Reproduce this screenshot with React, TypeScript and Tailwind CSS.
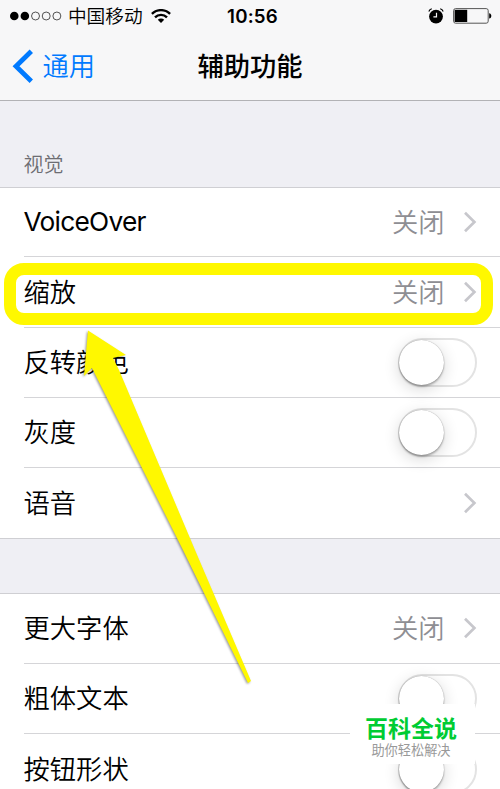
import type { ReactNode } from "react";
import clsx from "clsx";

type Item = {
  label: string;
  value?: string;
  toggle?: boolean;
};

const visionItems: Item[] = [
  { label: "VoiceOver", value: "关闭" },
  { label: "缩放", value: "关闭" },
  { label: "反转颜色", toggle: true },
  { label: "灰度", toggle: true },
  { label: "语音" },
];

const textItems: Item[] = [
  { label: "更大字体", value: "关闭" },
  { label: "粗体文本", toggle: true },
  { label: "按钮形状", toggle: true },
];

function Chevron() {
  return (
    <svg width="14" height="22" viewBox="0 0 14 22" fill="none" className="ml-[18px]">
      <path d="M2 1.8 11.4 11 2 20.2" stroke="#c7c7cc" strokeWidth="2.7" />
    </svg>
  );
}

function Toggle() {
  return (
    <div className="flex h-[49px] w-[79px] items-center rounded-full border-2 border-[#e3e3e3] bg-white">
      <div className="-ml-px size-[45px] rounded-full bg-white shadow-[0_2px_2px_rgba(0,0,0,0.25),0_0_1px_rgba(0,0,0,0.4),0_4px_16px_rgba(0,0,0,0.16)]" />
    </div>
  );
}

function Row({ item, last }: { item: Item; last: boolean }) {
  return (
    <div
      className={clsx(
        "ml-[23.5px] flex items-center justify-between pr-[23.5px]",
        !last && "border-b border-[#d5d5d8]"
      )}
    >
      <span className={item.label === "VoiceOver" ? "font-normal tracking-[-0.75px]" : "pt-0.5"}>
        {item.label}
      </span>
      {item.toggle ? (
        <Toggle />
      ) : (
        <div className="flex items-center text-[#8e8e93]">
          {item.value && <span className="pt-0.5">{item.value}</span>}
          <Chevron />
        </div>
      )}
    </div>
  );
}

function Group({ items, children, className }: { items: Item[]; children?: ReactNode; className: string }) {
  return (
    <section
      className={clsx(
        "relative grid border-y border-[#cfcfd3] bg-white text-[26.3px] leading-none font-[350] text-black",
        className
      )}
    >
      {items.map((item, i) => (
        <Row key={item.label} item={item} last={i === items.length - 1} />
      ))}
      {children}
    </section>
  );
}

function StatusBar() {
  return (
    <div className="grid h-8 grid-cols-3 items-center pr-[8px] pl-[10px]">
      <div className="flex items-center">
        <svg width="54" height="10" viewBox="0 0 54 10">
          <circle cx="4.4" cy="5" r="4.4" />
          <circle cx="15.3" cy="5" r="4.4" />
          <g fill="none" stroke="#222" strokeWidth="0.8">
            <circle cx="26.3" cy="5" r="4.1" />
            <circle cx="37.3" cy="5" r="4.1" />
            <circle cx="48.3" cy="5" r="4.1" />
          </g>
        </svg>
        <span className="ml-[5.5px] pt-0.5 text-[18.7px] leading-none font-[350] whitespace-nowrap">中国移动</span>
        <svg width="20" height="14" viewBox="0 0 20 14" fill="none" stroke="#000" strokeWidth="2.4" className="ml-[8px] shrink-0">
          <path d="M.9 4.9a12.9 12.9 0 0 1 18.2 0" />
          <path d="M4 8.4a8.5 8.5 0 0 1 12 0" />
          <path d="M10 14 6.8 10.8a4.5 4.5 0 0 1 6.4 0Z" fill="#000" stroke="none" />
        </svg>
      </div>
      <span className="pt-0.5 pl-[3px] text-center text-[18.7px] leading-none font-semibold tracking-[0.2px]">10:56</span>
      <div className="flex items-center justify-end">
        <svg width="16" height="16" viewBox="0 0 16 16" fill="none">
          <circle cx="8" cy="8.6" r="6.9" fill="#000" />
          <path d="M8.5 4.8v4.1H5.4" stroke="#f7f7f8" strokeWidth="1.2" />
          <path d="M.8 3.4A5 5 0 0 1 3.8.8M15.2 3.4a5 5 0 0 0-3-2.6" stroke="#000" strokeWidth="1.2" />
        </svg>
        <svg width="39" height="16" viewBox="0 0 39 16" className="ml-[9px]">
          <rect x=".6" y=".6" width="34.6" height="14.6" rx="2" fill="none" stroke="#555" strokeWidth="1" />
          <rect x="1.6" y="1.8" width="12.6" height="12.2" />
          <path d="M36.2 5.2c2.8.4 2.8 5 0 5.4Z" />
        </svg>
      </div>
    </div>
  );
}

export default function App() {
  return (
    <div className="relative h-[789px] w-[500px] overflow-hidden bg-[#efeff4] font-['Inter','Noto_Sans_CJK_SC',sans-serif] text-black">
      <header className="h-[101px] border-b border-[#b2b2b5] bg-[#f7f7f8]">
        <StatusBar />
        <div className="grid h-[68px] grid-cols-3 items-center text-[26.3px] leading-none">
          <div className="flex items-center pl-3 text-[#007aff]">
            <svg width="22" height="34" viewBox="0 0 22 34" fill="none">
              <path d="M19.3 2.2 4 17.2l15.3 15" stroke="#007aff" strokeWidth="4.8" />
            </svg>
            <span className="ml-[8.5px] pt-[3px] font-[350]">通用</span>
          </div>
          <h1 className="pt-[3px] text-center font-medium">辅助功能</h1>
        </div>
      </header>

      <h2 className="flex h-[86px] items-end pb-3 pl-[23.5px] text-[20px] leading-none font-[350] text-[#6d6d72]">视觉</h2>

      <Group items={visionItems} className="grid-rows-[69px_71px_70px_70px_70px]">
        <div className="absolute top-[75px] left-1 h-[62px] w-[489px] rounded-[20px] border-12 border-[#fff800]" />
      </Group>

      <div className="h-[54px]" />

      <Group items={textItems} className="grid-rows-[70px_70px_71px]" />

      <svg
        width="180"
        height="370"
        viewBox="0 0 180 370"
        className="absolute top-[325px] left-[78px] drop-shadow-[-1px_1px_1px_rgba(0,0,0,0.4)]"
      >
        <path d="M10 5.5 48 30 35 33 41 45 117 225 173 356 170 358 105 225 14 43 6 51Z" fill="#fff800" />
      </svg>

      <div className="absolute top-[704px] left-[350px] flex h-[60px] w-[125px] flex-col items-center bg-white pt-[14px] pr-[3px]">
        <span className="text-[23px] leading-none font-bold text-[#00cc33]">百科全说</span>
        <span className="mt-[3px] text-[13.2px] leading-none text-[#999]">助你轻松解决</span>
      </div>
    </div>
  );
}
